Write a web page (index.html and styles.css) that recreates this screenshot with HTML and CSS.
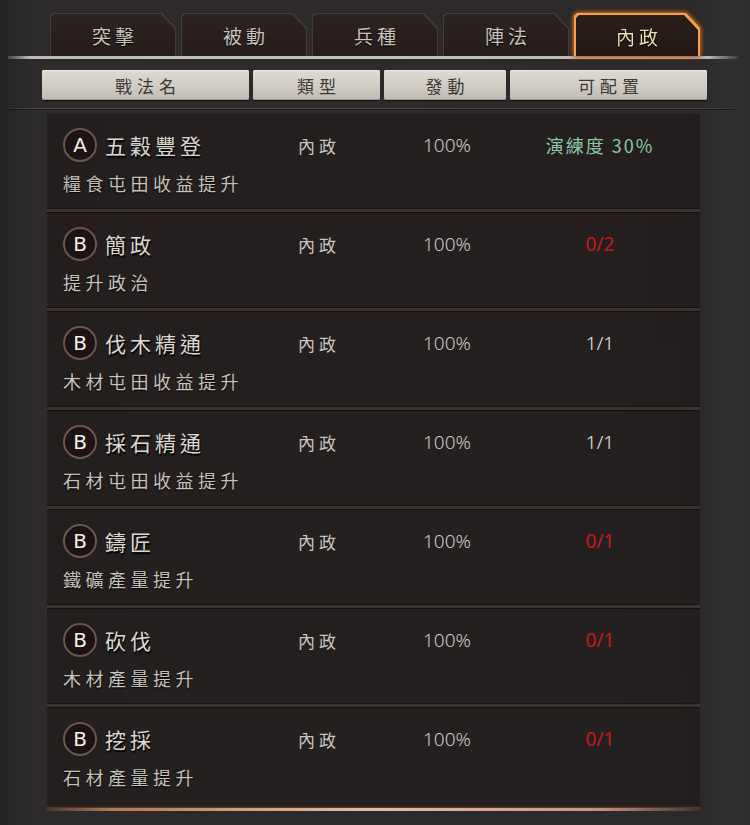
FILE: index.html
```html
<!DOCTYPE html>
<html lang="zh-Hant">
<head>
<meta charset="utf-8">
<link rel="stylesheet" href="styles.css">
</head>
<body>
<div class="screen">
  <div class="tabs">
    <div class="tab"><div class="tab-shape"><div class="tab-inner">突擊</div></div></div>
    <div class="tab"><div class="tab-shape"><div class="tab-inner">被動</div></div></div>
    <div class="tab"><div class="tab-shape"><div class="tab-inner">兵種</div></div></div>
    <div class="tab"><div class="tab-shape"><div class="tab-inner">陣法</div></div></div>
    <div class="tab active"><div class="tab-shape"><div class="tab-inner">內政</div></div></div>
  </div>
  <div class="tabline"></div>
  <div class="headers">
    <div class="hbtn w1">戰法名</div>
    <div class="hbtn w2">類型</div>
    <div class="hbtn w3">發動</div>
    <div class="hbtn w4">可配置</div>
  </div>
  <div class="rule"></div>
  <div class="list">
    <div class="row">
      <div class="name"><span class="grade">A</span><span class="title">五穀豐登</span></div>
      <div class="type">內政</div>
      <div class="rate">100%</div>
      <div class="conf green">演練度 30%</div>
      <div class="desc">糧食屯田收益提升</div>
    </div>
    <div class="row">
      <div class="name"><span class="grade">B</span><span class="title">簡政</span></div>
      <div class="type">內政</div>
      <div class="rate">100%</div>
      <div class="conf red">0/2</div>
      <div class="desc">提升政治</div>
    </div>
    <div class="row">
      <div class="name"><span class="grade">B</span><span class="title">伐木精通</span></div>
      <div class="type">內政</div>
      <div class="rate">100%</div>
      <div class="conf white">1/1</div>
      <div class="desc">木材屯田收益提升</div>
    </div>
    <div class="row">
      <div class="name"><span class="grade">B</span><span class="title">採石精通</span></div>
      <div class="type">內政</div>
      <div class="rate">100%</div>
      <div class="conf white">1/1</div>
      <div class="desc">石材屯田收益提升</div>
    </div>
    <div class="row">
      <div class="name"><span class="grade">B</span><span class="title">鑄匠</span></div>
      <div class="type">內政</div>
      <div class="rate">100%</div>
      <div class="conf red">0/1</div>
      <div class="desc">鐵礦產量提升</div>
    </div>
    <div class="row">
      <div class="name"><span class="grade">B</span><span class="title">砍伐</span></div>
      <div class="type">內政</div>
      <div class="rate">100%</div>
      <div class="conf red">0/1</div>
      <div class="desc">木材產量提升</div>
    </div>
    <div class="row last">
      <div class="name"><span class="grade">B</span><span class="title">挖採</span></div>
      <div class="type">內政</div>
      <div class="rate">100%</div>
      <div class="conf red">0/1</div>
      <div class="desc">石材產量提升</div>
    </div>
  </div>
  <div class="copper"></div>
</div>
</body>
</html>
```

FILE: styles.css
```css
* { box-sizing: border-box; }
html, body { margin: 0; padding: 0; }
body {
  width: 750px;
  height: 825px;
  overflow: hidden;
  background: #2c2b2b;
  font-family: "Noto Sans CJK TC", "Noto Sans", sans-serif;
}
.screen {
  width: 750px;
  height: 825px;
  background: linear-gradient(90deg, #262424 0px, #2c2a2a 40px, #2b2929 700px, #302f2f 720px, #2f2e2e 750px);
}
.tabs {
  display: flex;
  gap: 5px;
  padding: 13px 0 0 50px;
  height: 56px;
}
.tab {
  width: 126px;
  height: 43px;
}
.tab-shape {
  width: 100%;
  height: 100%;
  padding: 1px 1px 0 1px;
  background: #463b38;
  clip-path: polygon(3px 0, calc(100% - 14px) 0, 100% 15px, 100% 100%, 0 100%, 0 3px);
}
.tab-inner {
  width: 100%;
  height: 100%;
  background: linear-gradient(180deg, #2c2220 0%, #261c1a 100%);
  clip-path: polygon(3px 0, calc(100% - 14px) 0, 100% 15px, 100% 100%, 0 100%, 0 3px);
  display: flex;
  align-items: center;
  justify-content: center;
  color: #c9c2bc;
  font-size: 19px;
  letter-spacing: 4px;
  padding-left: 4px;
  padding-top: 1px;
  text-shadow: 0 1px 1px #000;
}
.tab.active {
  filter: drop-shadow(0 0 2px #d8741f) drop-shadow(0 0 2px #a04a10);
}
.tab.active .tab-shape {
  background: #f0a050;
  padding: 2px 2px 0 2px;
}
.tab.active .tab-inner {
  background: linear-gradient(180deg, #2a1e1a 0%, #211815 100%);
  color: #eedcb4;
}
.tabline {
  height: 3px;
  margin: 0 12px 0 8px;
  background: linear-gradient(90deg, rgba(200,200,200,0.2) 0%, #bdbab6 3%, #c4c1bd 50%, #b8b5b1 96%, rgba(200,200,200,0.1) 100%);
}
.headers {
  display: flex;
  gap: 4px;
  padding-left: 42px;
  margin-top: 11px;
  height: 30px;
}
.hbtn {
  height: 30px;
  border-radius: 2px;
  background: linear-gradient(180deg, #dedad2 0%, #d2cec6 50%, #bfbbb3 100%);
  box-shadow: 0 1px 0 #0c0b0b, inset 0 1px 0 #f2efe9, inset 0 -1px 0 #9e9a93;
  display: flex;
  align-items: center;
  justify-content: center;
  color: #3c3834;
  font-size: 17px;
  letter-spacing: 5px;
  padding-left: 5px;
}
.w1 { width: 207px; }
.w2 { width: 127px; }
.w3 { width: 122px; }
.w4 { width: 197px; }
.rule {
  height: 2px;
  margin: 8px 15px 0 5px;
  background: linear-gradient(90deg, rgba(80,76,76,0.2), #4f4b4a 4%, #4a4645 95%, rgba(80,76,76,0.2));
  border-bottom: 1px solid #1a1818;
}
.list {
  margin-left: 47px;
  margin-top: 4px;
  width: 653px;
  background: linear-gradient(180deg, #241f1e, #252020);
}
.row {
  height: 99px;
  padding-left: 16px;
  display: grid;
  grid-template-columns: 194px 120px 140px 166px;
  grid-template-rows: 42px 34px;
  align-items: center;
  padding-top: 10px;
  border-bottom: 1px solid #151010;
  box-shadow: inset 0 -3px 0 #3e3230, inset 0 -4px 0 #1a1413;
  background: linear-gradient(90deg, rgba(0,0,0,0.04), rgba(0,0,0,0) 20%, rgba(0,0,0,0) 85%, rgba(0,0,0,0.06));
}
.row.last { box-shadow: none; border-bottom: none; }
.name {
  display: flex;
  align-items: center;
  gap: 8px;
}
.grade {
  width: 34px;
  height: 34px;
  border-radius: 50%;
  background: radial-gradient(circle, #1e1212 55%, #2c1e1c 100%);
  border: 2px solid #6a5752;
  box-shadow: 0 0 0 1px #2a1f1d, inset 0 0 2px #000;
  display: flex;
  align-items: center;
  justify-content: center;
  color: #f2f0ee;
  font-family: "DejaVu Sans", "Noto Sans", sans-serif;
  font-size: 20px;
  line-height: 1;
  padding-bottom: 1px;
}
.title {
  color: #dcd8d2;
  font-size: 21px;
  letter-spacing: 4px;
  text-shadow: 1px 2px 1px #000;
}
.type {
  text-align: center;
  color: #cbc4be;
  font-size: 17px;
  letter-spacing: 4px;
  padding-left: 4px;
}
.rate {
  text-align: center;
  color: #cccac8;
  font-family: "Noto Sans", sans-serif;
  font-weight: 300;
  font-size: 19px;
}
.conf {
  text-align: center;
  font-size: 19px;
  font-family: "Noto Sans", "Noto Sans CJK TC", sans-serif;
  font-weight: 300;
}
.conf.green { color: #8ac8a4; font-family: "Noto Sans CJK TC", sans-serif; font-weight: 400; letter-spacing: 2px; font-size: 18px; }
.conf.red { color: #c21c1a; font-weight: 400; }
.conf.white { color: #ecebea; }
.desc {
  grid-column: 1 / 3;
  color: #c8c2bc;
  font-size: 18px;
  letter-spacing: 4.5px;
  text-shadow: 0 1px 1px #000;
}
.copper {
  margin: 1px 0 0 47px;
  width: 653px;
  height: 3px;
  background: linear-gradient(90deg, rgba(150,90,60,0.3) 0%, #b07a5c 10%, #e6c0a4 50%, #c49278 85%, rgba(150,90,60,0.2) 100%);
  box-shadow: 0 -1px 2px rgba(160,90,50,0.5);
}
```
